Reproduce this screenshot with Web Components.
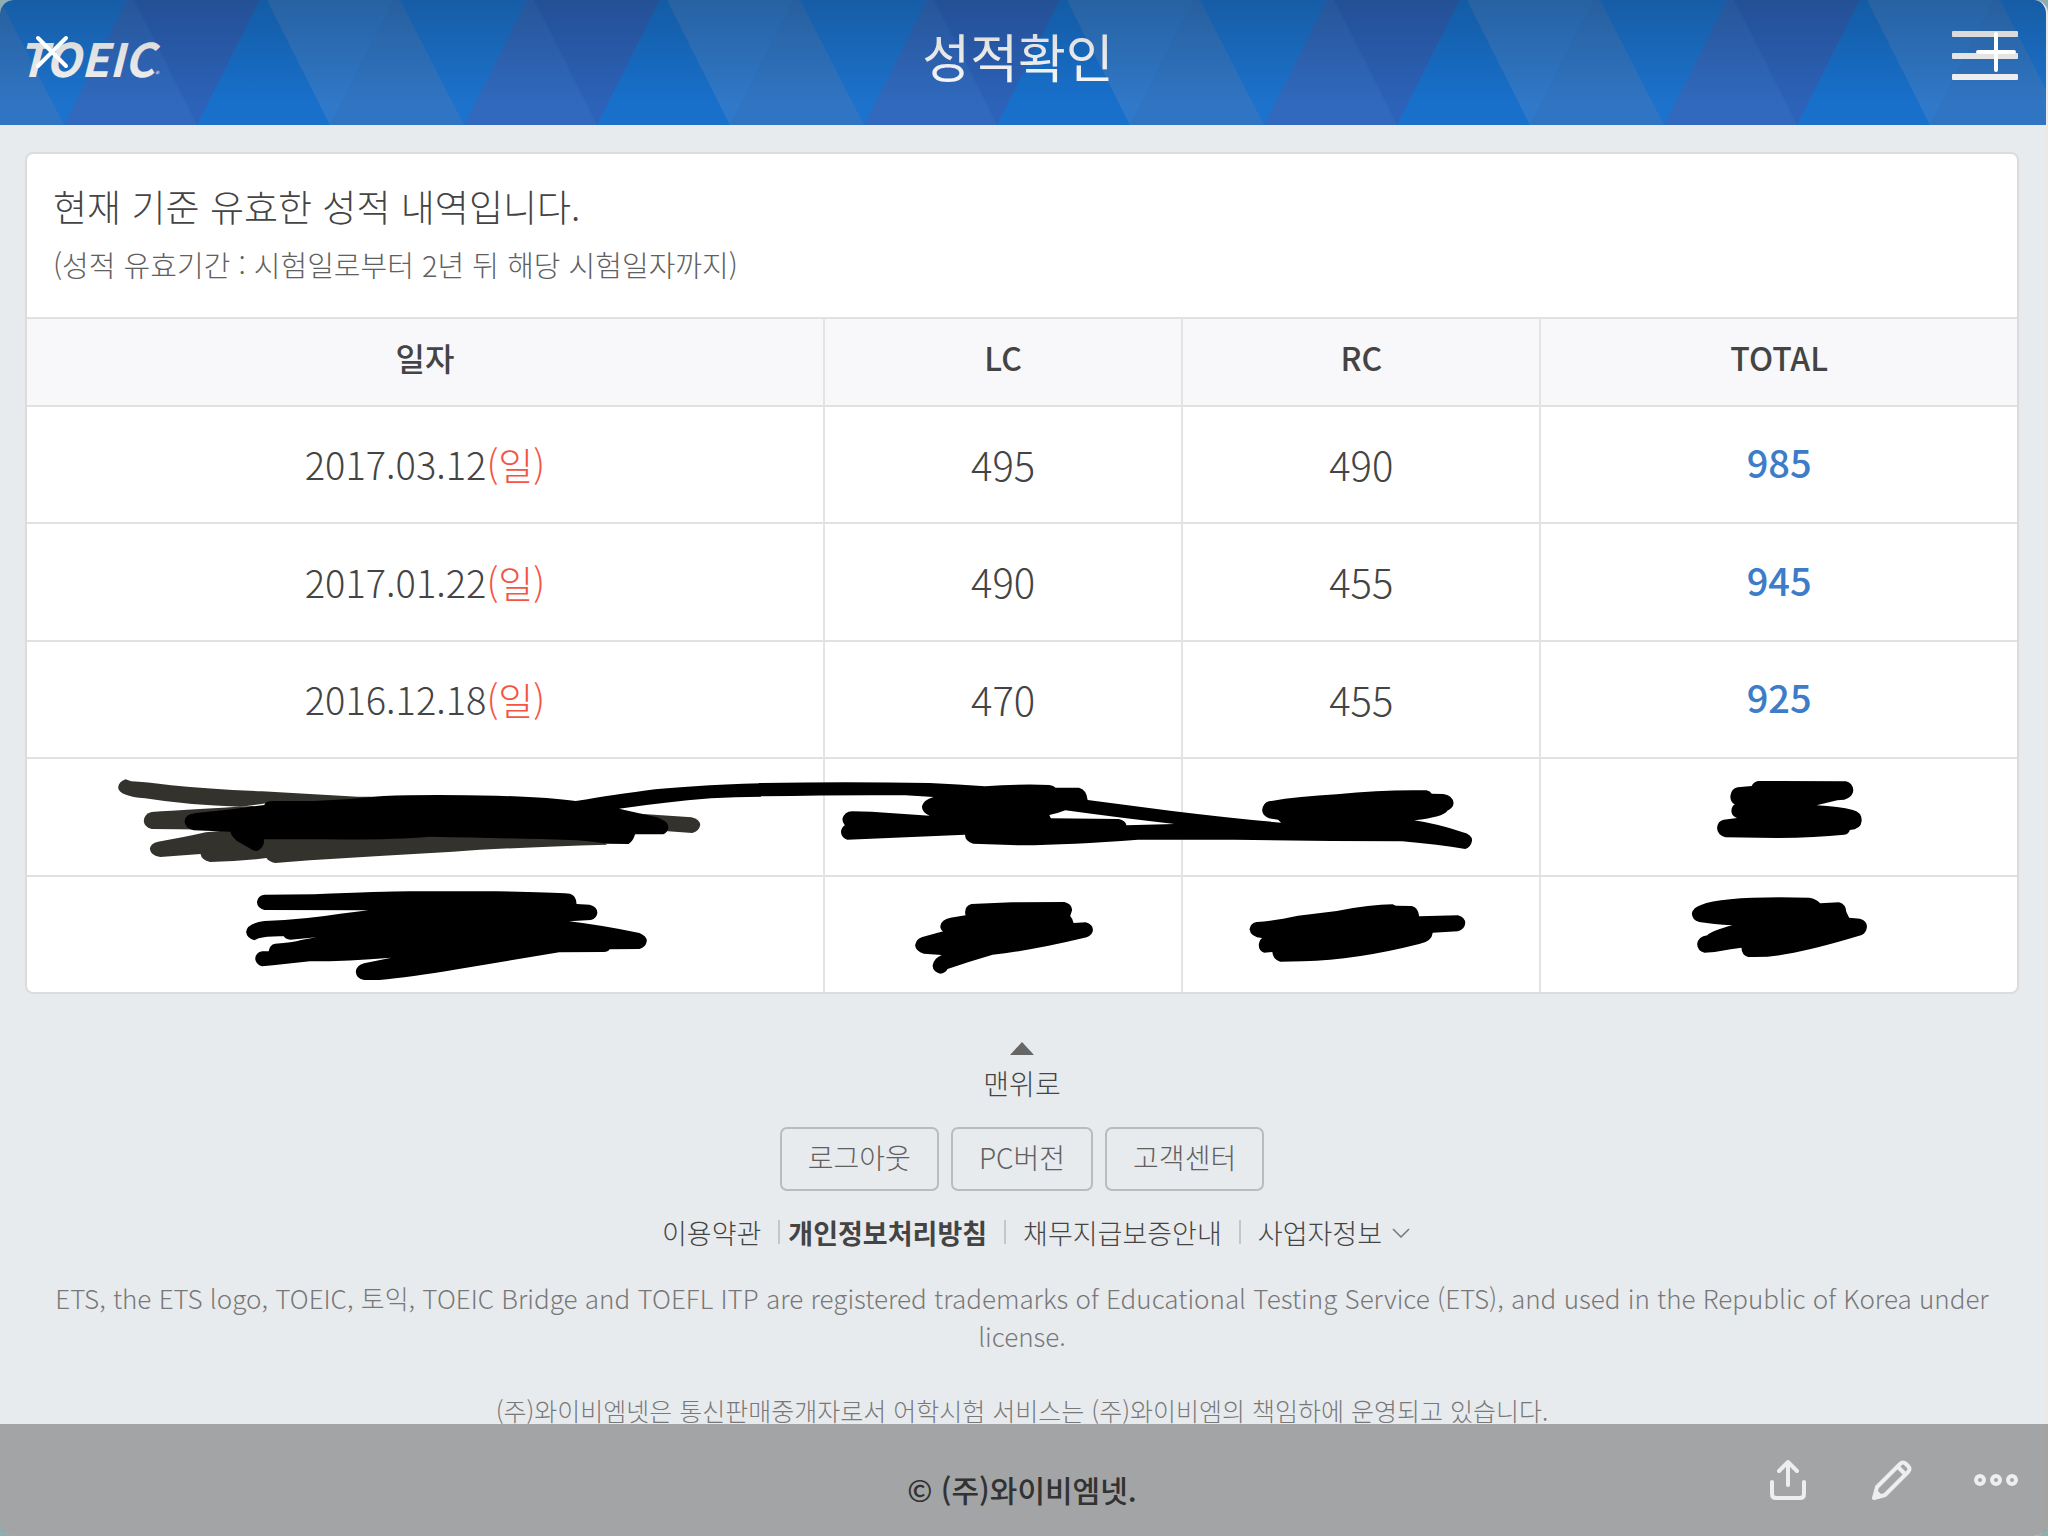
<!DOCTYPE html>
<html lang="ko">
<head>
<meta charset="utf-8">
<meta name="viewport" content="width=device-width, initial-scale=1">
<title>성적확인</title>
<style>
  html { background: #90aeb0; }
  body {
    margin: 0;
    font-family: "Noto Sans CJK KR", "Noto Sans", sans-serif;
    font-weight: 300;
    color: #444;
  }
</style>
</head>
<body>
<viewer-frame>
  <toeic-header heading="성적확인"></toeic-header>
  <score-card>
    <span slot="title">현재 기준 유효한 성적 내역입니다.</span>
    <span slot="note">(성적 유효기간 : 시험일로부터 2년 뒤 해당 시험일자까지)</span>
  </score-card>
  <site-footer></site-footer>
</viewer-frame>

<script>
class ViewerFrame extends HTMLElement {
  constructor() {
    super();
    this.attachShadow({ mode: "open" }).innerHTML = `
      <style>
        :host { display: block; position: relative; min-height: 100vh; }
        .page {
          box-sizing: border-box; min-height: 100vh; overflow: hidden;
          background: #e8ebee; border-right: 2px solid #ece9e4;
          border-radius: 14px;
        }
        .bar {
          position: fixed; left: 0; right: 0; display: flex; align-items: center;
          padding: 0 28px; box-sizing: border-box;
        }
        .top { top: 0; height: 104px; justify-content: space-between; }
        .bottom {
          bottom: 0; height: 112px; justify-content: flex-end; gap: 56px;
          background: rgba(0, 0, 0, .3); border-radius: 0 0 14px 14px;
        }
        button { width: 48px; height: 48px; padding: 0; border: 0; background: none; }
        svg { display: block; fill: none; stroke: #fff; stroke-width: 4; stroke-linecap: round; stroke-linejoin: round; }
        .bottom svg { stroke: #eee; }
      </style>
      <div class="page"><slot></slot></div>
      <div class="bar top">
        <button aria-label="닫기"><svg width="48" height="48"><path d="M10 10 38 38M38 10 10 38"/></svg></button>
        <button aria-label="추가"><svg width="48" height="48"><path d="M24 6V42M6 24H42"/></svg></button>
      </div>
      <div class="bar bottom">
        <button aria-label="공유"><svg width="48" height="48"><path d="M8 26V38Q8 42 12 42H36Q40 42 40 38V26M24 29V6M15 15 24 6 33 15"/></svg></button>
        <button aria-label="편집"><svg width="48" height="48"><path d="M6 42 9 31 32 8Q35 5 38 8L40 10Q43 13 40 16L17 39ZM30 11 37 18M6 42 8 36 12 40Z"/></svg></button>
        <button aria-label="더보기"><svg width="48" height="48"><g><circle cx="8" cy="24" r="4"/><circle cx="24" cy="24" r="4"/><circle cx="40" cy="24" r="4"/></g></svg></button>
      </div>`;
  }
}

class ToeicHeader extends HTMLElement {
  constructor() {
    super();
    this.attachShadow({ mode: "open" }).innerHTML = `
      <style>
        :host { display: block; }
        header {
          position: relative; display: grid; grid-template-columns: 1fr auto 1fr;
          align-items: center; height: 125px; padding: 0 28px 0 18px; box-sizing: border-box;
        }
        .tiles { position: absolute; inset: 0; width: 100%; height: 100%; }
        .shade {
          position: absolute; inset: 0;
          background: linear-gradient(rgba(0, 0, 0, .19), rgba(0, 0, 0, 0) 104px);
        }
        .left { padding-top: 6px; }
        .logo {
          position: relative; color: #f8f8f8; text-decoration: none;
          font-size: 46px; line-height: 64px; font-style: italic; font-weight: 700;
        }
        .logo small { font-size: 8px; font-weight: 400; }
        h1 { position: relative; margin: 0; font-size: 52px; font-weight: 400; line-height: 112px; color: #fff; height: 125px; }
        .menu {
          position: relative; justify-self: end; width: 66px; height: 50px;
          margin-bottom: 14px; padding: 0; border: 0; background: none;
        }
        .menu svg { display: block; }
      </style>
      <header>
        <svg class="tiles" aria-hidden="true">
          <defs>
            <pattern id="tri" width="400" height="125" patternUnits="userSpaceOnUse">
              <rect width="400" height="125" fill="#1c72cc"/>
              <path d="M-70 0H-3L64 125H-3Z" fill="#3075c3"/>
              <path d="M127 0H134L197 125H64Z" fill="#3069bd"/>
              <path d="M134 0H260L197 125Z" fill="#2c62b8"/>
              <path d="M260 0H267L330 125H197Z" fill="#1870cb"/>
              <path d="M267 0H394L330 125Z" fill="#3078c8"/>
              <path d="M394 0H400L464 125H330Z" fill="#3075c3"/>
              <path d="M-6 0H0L64 125H-70Z" fill="#3075c3"/>
            </pattern>
          </defs>
          <rect width="100%" height="100%" fill="url(#tri)"/>
        </svg>
        <div class="left"><a class="logo" href="#">TOEIC<small>®</small></a></div>
        <h1></h1>
        <button class="menu" aria-label="메뉴">
          <svg width="66" height="50"><g fill="#fafafa"><rect y="0" width="66" height="6" rx="1"/><rect y="22" width="66" height="6" rx="1"/><rect y="43" width="66" height="6" rx="1"/></g></svg>
        </button>
        <div class="shade"></div>
      </header>`;
  }
  connectedCallback() {
    this.shadowRoot.querySelector("h1").textContent = this.getAttribute("heading");
  }
}

const SCORES = [
  ["2017.03.12", 495, 490, 985],
  ["2017.01.22", 490, 455, 945],
  ["2016.12.18", 470, 455, 925],
];

class ScoreCard extends HTMLElement {
  constructor() {
    super();
    const rows = SCORES.map(([date, lc, rc, total]) => `
      <tr><td class="date">${date}<span>(일)</span></td><td>${lc}</td><td>${rc}</td><td class="total">${total}</td></tr>`).join("");
    this.attachShadow({ mode: "open" }).innerHTML = `
      <style>
        :host {
          display: block; position: relative; margin: 27px 27px 0 25px;
          background: #fff; border: 2px solid #dcdcdc; border-radius: 8px; overflow: hidden;
        }
        .intro { padding: 22px 26px 24px; }
        .intro h2, .intro p { margin: 0; font-weight: 300; }
        h2 { font-size: 37px; line-height: 60px; }
        p { font-size: 29px; line-height: 57px; color: #606060; }
        table { width: 100%; border-collapse: separate; border-spacing: 0; table-layout: fixed; }
        col.d { width: 40%; } col.s { width: 18%; }
        th, td { box-sizing: border-box; padding: 0; border-top: 2px solid #e1e1e1; text-align: center; }
        th + th, td + td { border-left: 2px solid #e4e4e4; }
        th { height: 88px; padding-bottom: 10px; background: #f8f8fa; font-size: 32px; font-weight: 500; }
        td { height: 117px; padding-bottom: 2px; font-size: 40px; }
        tr:nth-child(even) td { height: 118px; }
        .date { font-size: 38px; }
        .date span { color: #f45543; }
        .total { color: #3c7cc8; font-size: 38px; font-weight: 500; padding-bottom: 6px; }
        .ink { position: absolute; left: 0; bottom: 0; width: 100%; }
      </style>
      <div class="intro">
        <h2><slot name="title"></slot></h2>
        <p><slot name="note"></slot></p>
      </div>
      <table>
        <colgroup><col class="d"><col class="s"><col class="s"><col></colgroup>
        <thead><tr><th>일자</th><th>LC</th><th>RC</th><th>TOTAL</th></tr></thead>
        <tbody>${rows}
          <tr><td></td><td></td><td></td><td></td></tr>
          <tr><td></td><td></td><td></td><td></td></tr>
        </tbody>
      </table>
      <svg class="ink" viewBox="27 758 1990 234" aria-hidden="true">
        <g transform="translate(80 750) scale(.43367 .33333)">
          <g fill="#33322d">
            <path d="M105 88L118 94Q150 96 210 106Q300 118 420 124L640 140L720 140V170L430 160L370 170Q250 166 150 145Q90 138 88 113Q89 95 105 88Z"/>
            <path d="M165 186Q250 178 400 168L430 240L165 237Q148 230 147 213Q148 192 165 186Z"/>
            <path d="M180 275Q240 262 290 247L350 240L1200 262L1215 284Q1000 292 860 305L700 317L530 331L450 339Q435 335 430 324Q370 334 300 336Q280 330 278 312L185 321Q163 317 161 296Q163 280 180 275Z"/>
            <path d="M1290 191L1410 202Q1430 208 1430 226Q1428 243 1412 249L1340 242Z"/>
          </g>
          <path d="M268 189L350 178L425 165Q427 153 445 153H540Q620 149 700 138Q800 132 960 137Q1080 142 1143 153Q1240 132 1300 122Q1400 107 1570 100V140Q1450 140 1350 158Q1300 165 1243 176L1330 202Q1357 214 1357 232Q1355 248 1345 253H1280Q1275 275 1265 282L1215 281Q1160 270 1130 270Q1000 265 805 260Q720 270 560 268H424V280Q420 298 408 303Q398 303 390 294L362 273Q347 255 347 245L262 241Q242 235 241 214Q242 192 268 189Z"/>
          <path d="M425 434L540 433Q700 424 760 424H960Q1080 426 1130 431Q1145 437 1145 462L1175 464Q1193 470 1193 488Q1192 505 1178 510L1128 514Q1200 525 1290 549Q1307 558 1307 573Q1305 592 1290 597L1221 598Q1218 606 1208 606L1105 607Q980 634 870 658Q760 682 690 690H655Q637 686 636 665Q638 645 655 640L718 623Q620 634 530 634L445 646L420 649Q405 643 404 626Q406 606 420 604H435Q437 584 450 581Q490 578 510 570L545 562L485 569Q473 567 470 559Q430 558 412 565L402 571Q385 565 383 546Q385 520 425 513Q520 508 600 491L665 481L425 480Q409 475 408 456Q410 437 425 434Z"/>
        </g>
        <g transform="translate(760 750) scale(.48469 .33333)" fill-rule="evenodd">
          <path d="M-2 99Q180 94 350 99Q410 103 464 109Q540 101 597 105Q606 107 610 113H658Q674 119 676 150L850 183Q980 206 1075 218L1069 209L1050 205Q1037 198 1036 181Q1038 158 1050 154Q1110 139 1190 133Q1290 118 1375 121Q1383 124 1386 131L1410 132Q1431 138 1431 160Q1430 175 1418 182Q1412 200 1350 211Q1400 222 1450 247Q1470 254 1469 273Q1466 293 1455 297Q1400 284 1325 274L1180 273L980 269H780Q640 284 540 286L440 281Q423 274 423 254L180 269Q168 263 167 246Q168 232 175 226Q170 218 170 207Q174 185 190 184L230 185L350 197Q334 188 334 169Q337 150 358 141L300 136Q180 134 -2 139ZM630 181Q615 190 597 195L600 205L740 207Q755 212 756 226L855 222Q750 205 630 181Z"/>
          <path d="M436 462L520 457L628 456Q643 461 644 480L640 498Q646 508 647 519L672 517Q687 523 687 540Q686 556 674 562Q560 602 480 614Q430 635 387 657Q382 670 372 671Q357 665 356 647Q358 625 375 615L338 611Q321 604 320 586Q322 567 335 561L378 544Q372 540 372 528Q374 508 393 503L424 496Q420 470 436 462Z"/>
          <path d="M1025 516Q1060 513 1110 497L1190 483Q1260 463 1305 463L1312 467L1345 468Q1358 472 1360 499L1440 496Q1455 502 1455 520Q1454 538 1440 544L1388 548Q1386 575 1360 582Q1230 630 1120 634L1073 635Q1058 628 1057 606L1040 608Q1029 602 1029 584Q1031 568 1036 564Q1012 562 1010 538Q1012 518 1025 516Z"/>
        </g>
        <g transform="translate(1500 740) scale(.3495 .33333)">
          <path d="M738 123L990 124Q1010 130 1011 151Q1010 172 985 179L965 181L906 196Q970 199 1010 210Q1035 216 1035 242Q1033 268 1001 270Q998 282 985 284Q900 293 790 294L645 292Q622 285 621 264Q623 242 640 239L678 234Q662 228 662 212Q663 198 672 193Q659 188 659 168Q662 145 680 142L720 138Q725 126 738 123Z"/>
          <path d="M575 495Q630 472 800 472L885 473Q905 476 916 490L970 487Q990 493 991 516L999 533L1030 536Q1050 542 1050 560Q1048 578 1035 585Q900 628 820 642Q770 653 710 651Q691 645 691 623L660 628Q620 637 585 638Q565 633 564 612Q567 590 593 586Q605 572 665 556Q610 553 570 546Q549 540 549 520Q553 502 575 495Z"/>
        </g>
      </svg>`;
  }
}

class SiteFooter extends HTMLElement {
  constructor() {
    super();
    this.attachShadow({ mode: "open" }).innerHTML = `
      <style>
        :host { display: block; padding: 48px 50px 0 48px; text-align: center; }
        footer { display: flex; flex-direction: column; align-items: center; }
        a { color: #444; text-decoration: none; }
        .up { display: flex; flex-direction: column; align-items: center; font-size: 28px; line-height: 40px; gap: 8px; }
        .actions { display: flex; gap: 12px; margin-top: 24px; }
        button {
          height: 64px; padding: 0 26px 4px; border: 2px solid #bbb; border-radius: 7px; background: none;
          font: inherit; font-size: 28px; line-height: 40px; color: #606060;
        }
        nav { display: flex; align-items: center; margin: 21px 0 0 28px; font-size: 27px; line-height: 42px; }
        nav a + a { margin-left: 17px; }
        nav a + a::before { content: ""; display: inline-block; width: 2px; height: 24px; margin-right: 17px; background: #c4c6c8; }
        nav a.strong::before { margin-right: 8px; }
        .strong { font-weight: 700; }
        nav svg { margin-left: 10px; }
        p { margin: 0; line-height: 38px; color: #787878; }
        .marks { margin-top: 25px; font-size: 26px; }
        .notice { margin-top: 36px; font-size: 25px; }
        .copy { margin-top: 40px; font-size: 30px; line-height: 40px; font-weight: 500; color: #484848; }
      </style>
      <footer>
        <a class="up" href="#"><svg width="24" height="13" aria-hidden="true"><path d="M12 0 24 13H0Z" fill="#666"/></svg>맨위로</a>
        <div class="actions"><button>로그아웃</button><button>PC버전</button><button>고객센터</button></div>
        <nav>
          <a href="#">이용약관</a><a class="strong" href="#">개인정보처리방침</a><a href="#">채무지급보증안내</a><a href="#">사업자정보</a>
          <svg width="18" height="10" aria-hidden="true"><path d="M1 1 9 9 17 1" fill="none" stroke="#777" stroke-width="1.5"/></svg>
        </nav>
        <p class="marks">ETS, the ETS logo, TOEIC, 토익, TOEIC Bridge and TOEFL ITP are registered trademarks of Educational Testing Service (ETS), and used in the Republic of Korea under license.</p>
        <p class="notice">(주)와이비엠넷은 통신판매중개자로서 어학시험 서비스는 (주)와이비엠의 책임하에 운영되고 있습니다.</p>
        <p class="copy">© (주)와이비엠넷.</p>
      </footer>`;
  }
}

customElements.define("toeic-header", ToeicHeader);
customElements.define("score-card", ScoreCard);
customElements.define("site-footer", SiteFooter);
customElements.define("viewer-frame", ViewerFrame);
</script>
</body>
</html>
